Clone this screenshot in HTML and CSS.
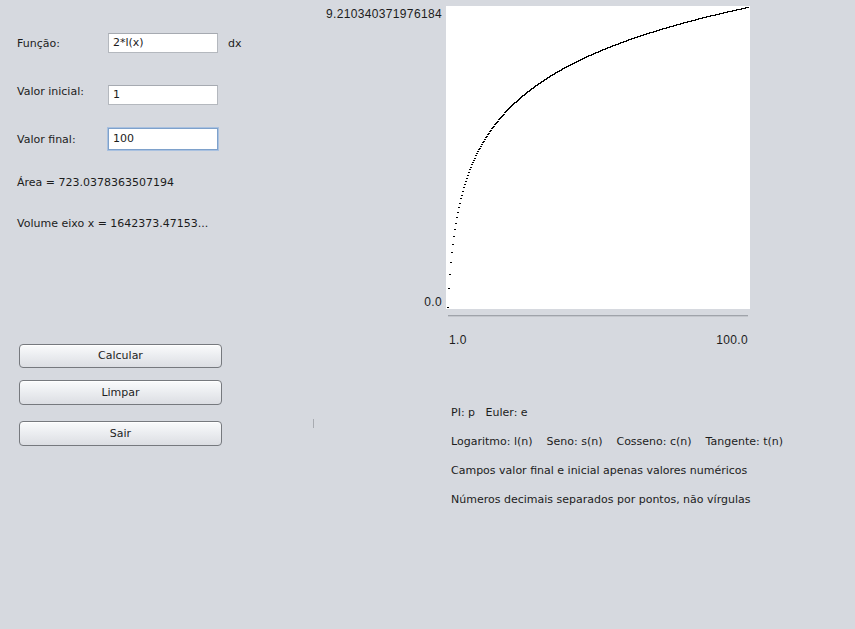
FILE: index.html
```html
<!DOCTYPE html>
<html lang="pt">
<head>
<meta charset="utf-8">
<title>Integral</title>
<link rel="stylesheet" href="styles.css">
<script src="script.js" defer></script>
</head>
<body>
<div class="window">
  <section class="left">
    <div class="form">
      <div class="row row1">
        <label class="lbl">Função:</label>
        <div class="input">2*l(x)</div>
        <span class="dx">dx</span>
      </div>
      <div class="row row2">
        <label class="lbl">Valor inicial:</label>
        <div class="input">1</div>
      </div>
      <div class="row row3">
        <label class="lbl">Valor final:</label>
        <div class="input focused">100</div>
      </div>
    </div>
    <p class="result area">Área = 723.0378363507194</p>
    <p class="result volume">Volume eixo x = 1642373.47153...</p>
    <div class="buttons">
      <div class="btn b1">Calcular</div>
      <div class="btn b2">Limpar</div>
      <div class="btn-row">
        <div class="btn b3">Sair</div>
        <span class="tick"></span>
      </div>
    </div>
  </section>
  <section class="right">
    <div class="chart">
      <div class="ylabels">
        <span>9.210340371976184</span>
        <span>0.0</span>
      </div>
      <div class="plot">
        <svg id="curve" width="304" height="303" viewBox="0 0 304 303" shape-rendering="crispEdges"></svg>
      </div>
      <div class="axis"></div>
      <div class="xlabels"><span>1.0</span><span>100.0</span></div>
    </div>
    <div class="help">
      <p>PI: p&nbsp;&nbsp;&nbsp;Euler: e</p>
      <p>Logaritmo: l(n)&nbsp;&nbsp;&nbsp;&nbsp;Seno: s(n)&nbsp;&nbsp;&nbsp;&nbsp;Cosseno: c(n)&nbsp;&nbsp;&nbsp;&nbsp;Tangente: t(n)</p>
      <p>Campos valor final e inicial apenas valores numéricos</p>
      <p>Números decimais separados por pontos, não vírgulas</p>
    </div>
  </section>
</div>
</body>
</html>
```

FILE: styles.css
```css
html, body {
  margin: 0;
  padding: 0;
  background: #d6d9df;
}
body {
  font-family: "DejaVu Sans", "Noto Sans", sans-serif;
  font-size: 11px;
  color: #1c1c1c;
}
.window {
  width: 855px;
  height: 629px;
  display: flex;
  overflow: hidden;
}
.left {
  width: 303px;
  padding: 33px 0 0 17px;
  display: flex;
  flex-direction: column;
}
.form {
  display: flex;
  flex-direction: column;
}
.row {
  display: flex;
  align-items: center;
}
.lbl { width: 91px; flex: none; }
.row2 { margin-top: 32px; }
.row2 .lbl { margin-top: -8px; }
.row3 { margin-top: 23px; }
.input {
  height: 18px;
  line-height: 18px;
  background: #fff;
  border: 1px solid #b4b8be;
  border-top-color: #a6aab1;
  padding: 0 4px;
  width: 100px;
}
.input.focused {
  border: 1px solid #7ea1cb;
  box-shadow: 0 0 0 1px #a9c1e0;
  height: 20px;
  line-height: 20px;
}
.dx { padding-left: 10px; }
.result { margin: 0; line-height: 14px; }
.area { margin-top: 26px; }
.volume { margin-top: 27px; }
.buttons {
  margin-top: 113px;
  margin-left: 2px;
  display: flex;
  flex-direction: column;
}
.btn {
  width: 201px;
  height: 22px;
  line-height: 22px;
  text-align: center;
  font-size: 11px;
  color: #1e1e1e;
  border: 1px solid #76797e;
  border-radius: 4px;
  background: linear-gradient(#fafbfc, #eceef1 45%, #dcdee3);
  box-shadow: inset 0 1px 0 #ffffff;
}
.b2 { margin-top: 12px; height: 23px; line-height: 23px; }
.btn-row {
  margin-top: 16px;
  display: flex;
  align-items: flex-start;
  gap: 91px;
}
.b3 { height: 23px; line-height: 23px; }
.tick {
  width: 1px;
  height: 9px;
  background: #a8abb1;
  margin-top: -2px;
}
.right {
  padding-top: 6px;
  display: flex;
  flex-direction: column;
}
.chart {
  display: grid;
  grid-template-columns: 122px 304px;
  column-gap: 4px;
  grid-template-rows: 303px auto auto;
}
.ylabels {
  display: flex;
  flex-direction: column;
  justify-content: space-between;
  align-items: flex-end;
  font-family: "Liberation Sans", Arial, sans-serif;
  font-size: 12px;
  letter-spacing: 0.35px;
  line-height: 14px;
}
.ylabels span:first-child { margin-top: 1px; }
.plot {
  background: #fff;
  width: 304px;
  height: 303px;
}
.plot svg { display: block; }
.axis {
  grid-column: 2;
  margin: 6px 2px 0 2px;
  height: 1px;
  border-top: 1px solid #9fa3aa;
  background: #c3c6cc;
}
.xlabels {
  grid-column: 2;
  display: flex;
  justify-content: space-between;
  margin: 16px 2px 0 3px;
  font-family: "Liberation Sans", Arial, sans-serif;
  font-size: 12px;
  letter-spacing: 0.35px;
  line-height: 14px;
}
.help {
  margin: 59px 0 0 131px;
}
.help p {
  margin: 0 0 15px 0;
  line-height: 14px;
  white-space: nowrap;
}
```

FILE: script.js
```js
(function () {
  var svg = document.getElementById('curve');
  var ns = 'http://www.w3.org/2000/svg';
  var x0 = 1, x1 = 100, ymax = 2 * Math.log(100);
  var w = 300, h = 300;
  for (var i = 0; i <= w; i++) {
    var x = x0 + (x1 - x0) * i / w;
    var y = 2 * Math.log(x);
    var py = Math.round(301 - y / ymax * h);
    var r = document.createElementNS(ns, 'rect');
    r.setAttribute('x', 1 + i);
    r.setAttribute('y', py);
    r.setAttribute('width', 2);
    r.setAttribute('height', 1);
    r.setAttribute('fill', '#000');
    svg.appendChild(r);
  }
})();
```
